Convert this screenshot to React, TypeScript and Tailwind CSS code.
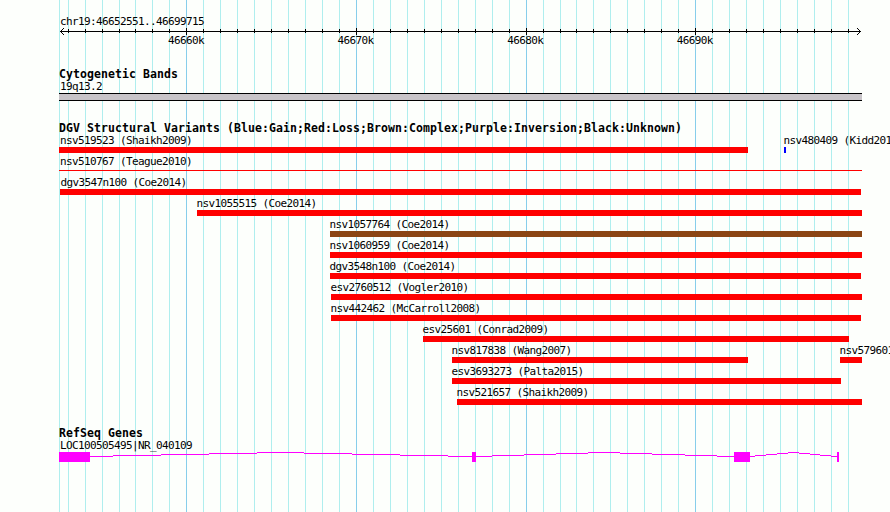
import React from 'react';

interface Feature {
  name: string;
  start: number;
  end: number;
  labelX: number;
  color?: string;
  thin?: boolean;
}

const MINOR_LINES = [
  68, 85, 102, 119, 135, 152, 169, 203, 220, 237, 254, 271, 288, 305, 322, 339,
  373, 390, 407, 424, 441, 458, 475, 492, 509, 543, 560, 576, 593, 610, 627, 644,
  661, 678, 712, 729, 746, 763, 780, 797, 814, 831, 848,
];

const MAJOR_LINES = [186, 356, 526, 695];

const SCALE_LABELS = ['46660k', '46670k', '46680k', '46690k'];

const ROWS: Feature[][] = [
  [
    { name: 'nsv519523 (Shaikh2009)', start: 59, end: 748, labelX: 60 },
    { name: 'nsv480409 (Kidd2014)', start: 784, end: 786, labelX: 783.5, color: 'bg-[#0000ff]' },
  ],
  [{ name: 'nsv510767 (Teague2010)', start: 59, end: 862, labelX: 60, thin: true }],
  [{ name: 'dgv3547n100 (Coe2014)', start: 60, end: 861, labelX: 60.5 }],
  [{ name: 'nsv1055515 (Coe2014)', start: 197, end: 862, labelX: 196.5 }],
  [{ name: 'nsv1057764 (Coe2014)', start: 330, end: 862, labelX: 329.5, color: 'bg-[#8b4513]' }],
  [{ name: 'nsv1060959 (Coe2014)', start: 330, end: 862, labelX: 329.5 }],
  [{ name: 'dgv3548n100 (Coe2014)', start: 330, end: 861, labelX: 329.5 }],
  [{ name: 'esv2760512 (Vogler2010)', start: 331, end: 862, labelX: 330.5 }],
  [{ name: 'nsv442462 (McCarroll2008)', start: 331, end: 861, labelX: 330.5 }],
  [{ name: 'esv25601 (Conrad2009)', start: 423, end: 849, labelX: 422.5 }],
  [
    { name: 'nsv817838 (Wang2007)', start: 452, end: 748, labelX: 451.5 },
    { name: 'nsv579601', start: 840, end: 862, labelX: 839.5 },
  ],
  [{ name: 'esv3693273 (Palta2015)', start: 452, end: 841, labelX: 451.5 }],
  [{ name: 'nsv521657 (Shaikh2009)', start: 457, end: 862, labelX: 456.5 }],
];

// exon boxes as [start, end]
const EXONS = [[59, 90], [472, 476], [734, 750], [837, 839]];

// intron segments as [start, end, height above baseline]
const INTRONS = [
  [90, 113, 0], [113, 161, 1], [161, 209, 2], [209, 257, 3], [257, 304, 4],
  [304, 352, 3], [352, 400, 2], [400, 448, 1], [448, 472, 0],
  [476, 492, 0], [492, 524, 1], [524, 556, 2], [556, 588, 3], [588, 620, 4],
  [620, 652, 3], [652, 685, 2], [685, 717, 1], [717, 734, 0],
  [750, 755, 0], [755, 766, 1], [766, 777, 2], [777, 788, 3], [788, 799, 4],
  [799, 810, 3], [810, 820, 2], [820, 831, 1], [831, 837, 0],
];

const LABEL = 'whitespace-pre text-[11px] tracking-[-0.623px]';

function Gridlines() {
  return (
    <svg className="absolute inset-0" width="890" height="512" shapeRendering="crispEdges">
      {[59, ...MINOR_LINES].map((x) => (
        <rect key={x} x={x} y="0" width="1" height="512" fill="#afeeee" />
      ))}
      {MAJOR_LINES.map((x) => (
        <rect key={x} x={x} y="0" width="1" height="512" fill="#87ceeb" />
      ))}
    </svg>
  );
}

function Ruler() {
  return (
    <svg className="block" width="890" height="7" shapeRendering="crispEdges">
      <rect x="60" y="3" width="801" height="1" />
      {MINOR_LINES.map((x) => (
        <rect key={x} x={x} y="1" width="1" height="4" />
      ))}
      {MAJOR_LINES.map((x) => (
        <rect key={x} x={x} y="0" width="1" height="7" />
      ))}
      {[1, 2, 3].map((d) => (
        <g key={d}>
          <rect x={60 + d} y={3 - d} width="1" height="1" />
          <rect x={60 + d} y={3 + d} width="1" height="1" />
          <rect x={860 - d} y={3 - d} width="1" height="1" />
          <rect x={860 - d} y={3 + d} width="1" height="1" />
        </g>
      ))}
    </svg>
  );
}

function Heading({ children }: { children: React.ReactNode }) {
  return (
    <h2 className="pl-[59px] whitespace-pre text-[11.5px] leading-[13px] font-bold tracking-[0.077px]">
      {children}
    </h2>
  );
}

function VariantRow({ features }: { features: Feature[] }) {
  return (
    <div className="grid h-[21px] grid-cols-[890px]">
      {features.map((f) => (
        <div key={f.name} className="col-start-1 row-start-1">
          <div className={`${LABEL} leading-[13px]`} style={{ paddingLeft: f.labelX }}>
            {f.name}
          </div>
          <div
            className={`${f.color ?? 'bg-[#ff0000]'} ${f.thin ? 'mt-[2px] h-px' : 'h-[6px]'}`}
            style={{ marginLeft: f.start, width: f.end - f.start }}
          />
        </div>
      ))}
    </div>
  );
}

function GeneModel() {
  return (
    <svg className="block" width="890" height="10" fill="#ff00ff" shapeRendering="crispEdges">
      {EXONS.map(([start, end]) => (
        <rect key={start} x={start} y="0" width={end - start} height="10" />
      ))}
      {INTRONS.map(([start, end, rise]) => (
        <rect key={start} x={start} y={4 - rise} width={end - start} height="1" />
      ))}
    </svg>
  );
}

export default function App() {
  return (
    <div className="relative h-[512px] w-[890px] overflow-hidden bg-[#fdfffc] font-['DejaVu_Sans_Mono',monospace] text-black">
      <Gridlines />
      <main className="relative flex flex-col">
        {/* Region and scale */}
        <section className="h-[68px] pt-[15px]">
          <p className={`${LABEL} leading-[13px] pl-[60px]`}>chr19:46652551..46699715</p>
          <Ruler />
          <div className="flex gap-[134px] pl-[168px]">
            {SCALE_LABELS.map((label) => (
              <span key={label} className={`${LABEL} w-[35.6px] leading-[11px]`}>
                {label}
              </span>
            ))}
          </div>
        </section>

        {/* Cytogenetic bands */}
        <section className="h-[54px]">
          <Heading>Cytogenetic Bands</Heading>
          <p className={`${LABEL} h-[12px] pl-[60px] leading-[11px]`}>19q13.2</p>
          <div className="ml-[59px] h-[8px] w-[803px] border-y border-black bg-[#c8c4c8]" />
        </section>

        {/* Structural variants */}
        <section className="h-[305px]">
          <Heading>DGV Structural Variants (Blue:Gain;Red:Loss;Brown:Complex;Purple:Inversion;Black:Unknown)</Heading>
          <div className="-mt-px">
            {ROWS.map((features) => (
              <VariantRow key={features[0].name} features={features} />
            ))}
          </div>
        </section>

        {/* Genes */}
        <section>
          <Heading>RefSeq Genes</Heading>
          <p className={`${LABEL} h-[12px] pl-[60px] leading-[11px]`}>LOC100505495|NR_040109</p>
          <GeneModel />
        </section>
      </main>
    </div>
  );
}
